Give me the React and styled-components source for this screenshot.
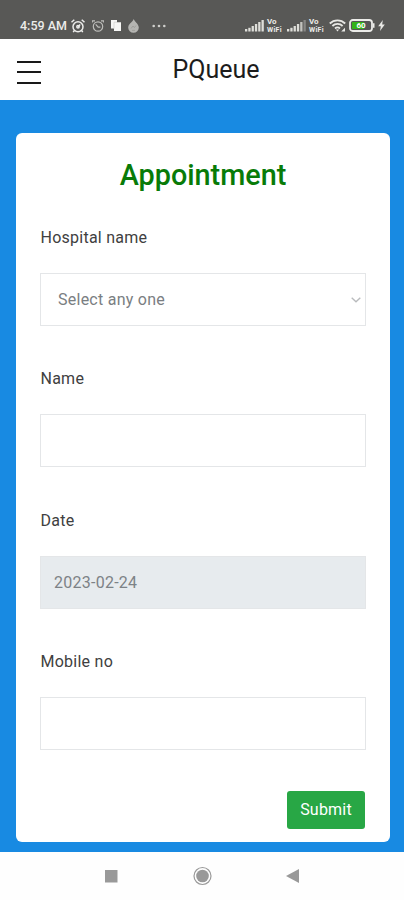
import React, { useState } from 'react';
import styled, { createGlobalStyle } from 'styled-components';


const GlobalStyles = createGlobalStyle`
  * {
    box-sizing: border-box;
  }

  body {
    margin: 0;
    background: white;
    font-family: Roboto, sans-serif;
  }
`;

const Screen = styled.div`
  display: flex;
  flex-direction: column;
  height: 900px;
`;

const StatusBar = styled.div`
  display: flex;
  align-items: center;
  justify-content: space-between;
  height: 39px;
  padding: 12px 19px 0 20px;
  background: #585856;
  color: #ececea;
`;

const StatusGroup = styled.div`
  display: flex;
  align-items: center;
  height: 18px;

  svg {
    display: block;
    flex: none;
    margin-left: ${({ $gap }) => $gap}px;
  }
`;

const Clock = styled.span`
  width: 48px;
  margin-right: -4px;
  font-size: 12.5px;
  font-weight: 500;
  letter-spacing: 0;
  white-space: nowrap;
`;

const VoWifi = styled.span`
  width: 17px;
  margin-left: 3px;
  font-size: 8px;
  font-weight: 700;
  line-height: 8px;
  white-space: nowrap;

  b {
    display: block;
    font-weight: 700;
  }

  small {
    display: block;
    height: 8px;
    font-size: 7px;
    letter-spacing: 0.3px;
  }
`;

const Header = styled.header`
  display: grid;
  grid-template-columns: 1fr auto 1fr;
  align-items: center;
  height: 61px;
  padding: 0 0 0 28px;
  background: white;
`;

const MenuBtn = styled.button`
  display: flex;
  flex-direction: column;
  justify-content: space-between;
  width: 24px;
  height: 23px;
  margin: 5px 0 0 -11px;
  padding: 0;
  border: none;
  background: none;
`;

const MenuLine = styled.span`
  height: 2px;
  background: #191919;
`;

const Brand = styled.h1`
  margin: 0;
  color: #1c1c1c;
  font-size: 25px;
  font-weight: 400;
  line-height: 30px;
`;

const Main = styled.main`
  height: 752px;
  padding: 33px 14px 10px 16px;
  background: #188ae2;
`;

const Card = styled.form`
  display: flex;
  flex-direction: column;
  height: 709px;
  padding: 24px 24px 13px 24px;
  border-radius: 6px;
  background: white;
`;

const Title = styled.h2`
  margin: 0 0 33px;
  color: #087b08;
  font-size: 28.8px;
  font-weight: 500;
  line-height: 36px;
  text-align: center;
`;

const Field = styled.div`
  display: flex;
  flex-direction: column;
  margin-bottom: 41.3px;
`;

const Label = styled.label`
  margin: 0 0 23px 0.5px;
  color: #404040;
  font-size: 16px;
  line-height: 24px;
  letter-spacing: 0.25px;
`;

const Input = styled.input`
  width: 326px;
  height: 53px;
  padding: 0 13px;
  border: 1.5px solid #e4e6e8;
  border-radius: 0;
  background: ${({ disabled }) => (disabled ? '#e7ebee' : 'white')};
  color: #7d8286;
  font-family: inherit;
  font-size: 16px;
  letter-spacing: 0.25px;
`;

const SelectBox = styled.div`
  display: flex;
  align-items: center;
  width: 326px;
  height: 53px;
  padding: 0 4px 0 17px;
  border: 1.5px solid #e4e6e8;
`;

const Select = styled.select`
  flex: 1;
  padding: 0;
  border: none;
  appearance: none;
  background: none;
  color: #7a7e82;
  font-family: inherit;
  font-size: 16px;
  letter-spacing: 0.25px;
`;

const SubmitBtn = styled.button`
  align-self: flex-end;
  width: 78px;
  height: 39px;
  margin: -0.5px 1px 0 0;
  padding: 0;
  border: none;
  border-radius: 3px;
  background: #28a745;
  color: white;
  font-family: inherit;
  font-size: 16px;
  letter-spacing: 0.2px;
`;

const NavBar = styled.nav`
  display: flex;
  align-items: center;
  height: 48px;
  padding-left: 104px;
  background: #fefefe;
`;

const NavIcon = styled.svg`
  display: block;
  width: 20px;
  height: 20px;
  margin-right: 71px;
  overflow: visible;
  fill: #999;
`;


const Signal = ({ weak }) => (
    <svg width="19" height="12" viewBox="0 0 19 12" fill="#deded9">
        <rect x="0" y="9" width="2.3" height="2.5" />
        <rect x="3.3" y="7.8" width="2.3" height="3.7" />
        <rect x="6.6" y="6" width="2.3" height="5.5" />
        <rect x="9.9" y="4" width="2.3" height="7.5" />
        <rect x="13.2" y="2" width="2.3" height="9.5" opacity={weak ? 0.8 : 1} />
        <rect x="16.5" y="0" width="2.3" height="11.5" opacity={weak ? 0.35 : 1} />
    </svg>
);

const AlarmIcon = () => (
    <svg width="14" height="14" viewBox="0 0 14 14" fill="none" stroke="#ececea" strokeWidth="1.5">
        <circle cx="7" cy="7.7" r="5" />
        <circle cx="7" cy="7.7" r="1.2" />
        <path d="M7 7.7 9.2 5.5M.5 3.3 3.3.8M13.5 3.3 10.7.8M3.4 11.5l-1.2 1.6M10.6 11.5l1.2 1.6" />
    </svg>
);

const ClockIcon = () => (
    <svg width="12" height="12" viewBox="0 0 12 12" fill="none" stroke="#bdbdba" strokeWidth="1.2">
        <path d="M.3 2.6V.9H3M9 .9h2.7v1.7" />
        <circle cx="6" cy="6.5" r="4.7" />
        <path d="M3.7 4.3 6.2 7.1H8.4" />
    </svg>
);

const FilesIcon = () => (
    <svg width="10" height="11" viewBox="0 0 10 11">
        <path fill="#f7f7f5" d="M0 0h6v2.2h4V11H3V8.5H0Z" />
        <path fill="none" stroke="#c9c9c6" strokeWidth=".6" d="M6 2.2H3v6.3" />
    </svg>
);

const DropIcon = () => (
    <svg width="11" height="14" viewBox="0 0 11 14">
        <path fill="#b5b5b2" d="M5.8 0C6 2.2 10.8 4.8 10.8 8.5A5.3 5.2 0 0 1 .2 8.5C.2 5.7 2 4.7 3.4 3.2 4.4 2.2 5.3 1.3 5.8 0Z" />
        <path fill="none" stroke="#999996" strokeWidth=".8" d="M3 9.5 5 7l1.4 1.6L8 6.5M4 11.4h3" />
    </svg>
);

const DotsIcon = () => (
    <svg width="20" height="4" viewBox="-6 0 20 4" fill="#cfcfcc">
        <circle cx="1.7" cy="2" r="1.3" />
        <circle cx="7" cy="2" r="1.3" />
        <circle cx="12.3" cy="2" r="1.3" />
    </svg>
);

const WifiIcon = () => (
    <svg width="17" height="13" viewBox="0 0 17 13" fill="none" stroke="#e8e8e5" strokeWidth="1.8">
        <path d="M.8 4.5A11 11 0 0 1 16.2 4.5M3.4 7A7.2 7.2 0 0 1 13.6 7M6 9.5A3.7 3.7 0 0 1 11 9.5" />
        <path fill="#e8e8e5" stroke="none" d="M8.5 12.4 6.9 10.5h3.2ZM12.2 12.5 16 8.8v3.7Z" />
    </svg>
);

const BatteryIcon = () => (
    <svg width="26" height="13" viewBox="0 0 26 13">
        <rect x="1" y="1" width="22" height="11" rx="2.8" fill="#555" stroke="#ecece9" strokeWidth="1.8" />
        <path d="M24 4.2h1.5v4.6H24Z" fill="#ecece9" />
        <rect x="3" y="3" width="12" height="7" fill="#35b31a" />
        <text x="12" y="9.4" fill="white" fontSize="8" fontWeight="700" textAnchor="middle">60</text>
    </svg>
);

const BoltIcon = () => (
    <svg width="7" height="11" viewBox="0 0 7 11" fill="#e8e8e5">
        <path d="M4.8 0 .2 6.2h2.6L2 11l4.8-6.4H4.2Z" />
    </svg>
);

const ChevronIcon = () => (
    <svg width="10" height="6" viewBox="0 0 10 6" fill="none" stroke="#b9bbbd" strokeWidth="1.4">
        <path d="M.7.8 5 4.7 9.3.8" />
    </svg>
);


const App = () => {
    const [hospital, setHospital] = useState('');
    const [name, setName] = useState('');
    const [mobile, setMobile] = useState('');

    return(
        <Screen>
            <GlobalStyles/>
            <StatusBar>
                <StatusGroup $gap={7}>
                    <Clock>4:59 AM</Clock>
                    <AlarmIcon />
                    <ClockIcon />
                    <FilesIcon />
                    <DropIcon />
                    <DotsIcon />
                </StatusGroup>
                <StatusGroup $gap={3}>
                    <Signal />
                    <VoWifi><b>Vo</b><small>WiFi</small></VoWifi>
                    <Signal weak />
                    <VoWifi><b>Vo</b><small>WiFi</small></VoWifi>
                    <WifiIcon />
                    <BatteryIcon />
                    <BoltIcon />
                </StatusGroup>
            </StatusBar>

            <Header>
                <MenuBtn aria-label="Menu">
                    <MenuLine />
                    <MenuLine />
                    <MenuLine />
                </MenuBtn>
                <Brand>PQueue</Brand>
            </Header>

            <Main>
                <Card onSubmit={(e) => e.preventDefault()}>
                    <Title>Appointment</Title>
                    <Field>
                        <Label htmlFor="hospital">Hospital name</Label>
                        <SelectBox>
                            <Select id="hospital" value={hospital} onChange={(e) => setHospital(e.target.value)}>
                                <option value="">Select any one</option>
                            </Select>
                            <ChevronIcon />
                        </SelectBox>
                    </Field>
                    <Field>
                        <Label htmlFor="name">Name</Label>
                        <Input id="name" value={name} onChange={(e) => setName(e.target.value)} />
                    </Field>
                    <Field>
                        <Label htmlFor="date">Date</Label>
                        <Input id="date" value="2023-02-24" disabled />
                    </Field>
                    <Field>
                        <Label htmlFor="mobile">Mobile no</Label>
                        <Input id="mobile" value={mobile} onChange={(e) => setMobile(e.target.value)} />
                    </Field>
                    <SubmitBtn>Submit</SubmitBtn>
                </Card>
            </Main>

            <NavBar>
                <NavIcon viewBox="0 0 20 20"><rect x="1" y="4" width="12.5" height="12.5" /></NavIcon>
                <NavIcon viewBox="0 0 20 20">
                    <circle cx="7.5" cy="10" r="8.5" fill="none" stroke="#999" strokeWidth="1.2" />
                    <circle cx="7.5" cy="10" r="6.3" />
                </NavIcon>
                <NavIcon viewBox="0 0 20 20"><path d="M0 10 13 3v14Z" /></NavIcon>
            </NavBar>
        </Screen>
    );
};


export default App;
